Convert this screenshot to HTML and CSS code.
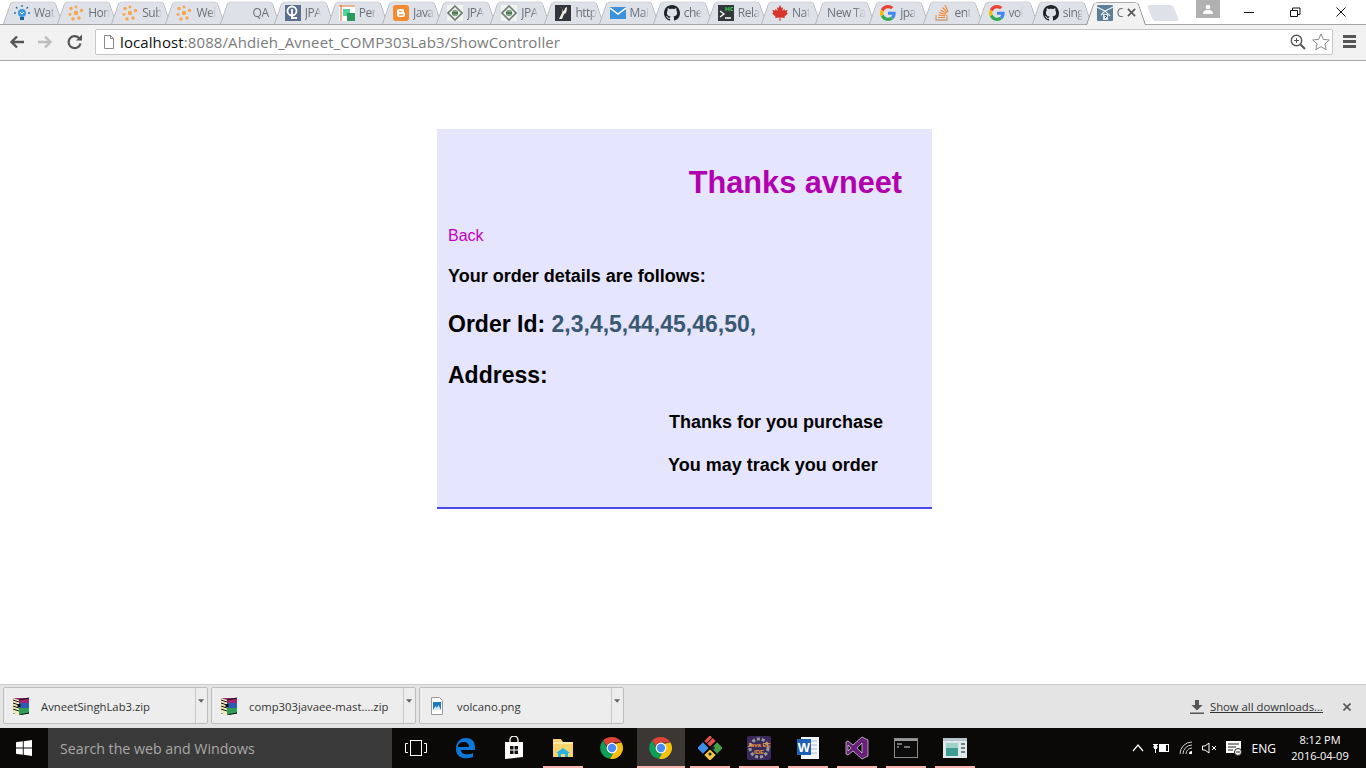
FILE: index.html
```html
<!DOCTYPE html>
<html>
  <head>
    <title>Thanks</title>
    <link rel="stylesheet" href="styles.css">
  </head>

  <body>
    <svg class="defs" width="0" height="0">
      <defs>
        <symbol id="i-hub" viewBox="0 0 16 16">
          <g fill="#f7a64a">
            <circle cx="8" cy="8" r="2.2"/><circle cx="3" cy="3.5" r="1.7"/><circle cx="8" cy="2" r="1.4"/>
            <circle cx="13.5" cy="5.5" r="1.7"/><circle cx="2" cy="9.5" r="1.4"/><circle cx="5" cy="14" r="1.7"/>
            <circle cx="11" cy="13" r="1.7"/>
          </g>
        </symbol>
        <symbol id="i-jpa" viewBox="0 0 16 16">
          <rect width="16" height="16" fill="#f1f3f1"/>
          <path d="M8 1l7 7-7 7-7-7z" fill="none" stroke="#6d7a70" stroke-width="1.6"/>
          <circle cx="8" cy="8" r="3.2" fill="#7fa583"/>
          <path d="M5 8h6" stroke="#3d5540" stroke-width="1.2"/>
        </symbol>
        <symbol id="i-github" viewBox="0 0 16 16">
          <path fill="#1e2327" d="M8 0C3.58 0 0 3.58 0 8c0 3.54 2.29 6.53 5.47 7.59.4.07.55-.17.55-.38 0-.19-.01-.82-.01-1.49-2.01.37-2.53-.49-2.69-.94-.09-.23-.48-.94-.82-1.13-.28-.15-.68-.52-.01-.53.63-.01 1.08.58 1.23.82.72 1.21 1.87.87 2.33.66.07-.52.28-.87.51-1.07-1.78-.2-3.64-.89-3.64-3.95 0-.87.31-1.59.82-2.15-.08-.2-.36-1.02.08-2.12 0 0 .67-.21 2.2.82.64-.18 1.32-.27 2-.27.68 0 1.36.09 2 .27 1.53-1.04 2.2-.82 2.2-.82.44 1.1.16 1.92.08 2.12.51.56.82 1.27.82 2.15 0 3.07-1.87 3.75-3.65 3.95.29.25.54.73.54 1.48 0 1.07-.01 1.93-.01 2.2 0 .21.15.46.55.38A8.013 8.013 0 0016 8c0-4.42-3.58-8-8-8z"/>
        </symbol>
        <symbol id="i-google" viewBox="0 0 48 48">
          <path fill="#EA4335" d="M24 9.5c3.54 0 6.71 1.22 9.21 3.6l6.85-6.85C35.9 2.38 30.47 0 24 0 14.62 0 6.51 5.38 2.56 13.22l7.98 6.19C12.43 13.72 17.74 9.5 24 9.5z"/>
          <path fill="#4285F4" d="M46.98 24.55c0-1.57-.15-3.09-.38-4.55H24v9.02h12.94c-.58 2.96-2.26 5.48-4.78 7.18l7.73 6c4.51-4.18 7.09-10.36 7.09-17.65z"/>
          <path fill="#FBBC05" d="M10.53 28.59c-.48-1.45-.76-2.99-.76-4.59s.27-3.14.76-4.59l-7.98-6.19C.92 16.46 0 20.12 0 24c0 3.88.92 7.54 2.56 10.78l7.97-6.19z"/>
          <path fill="#34A853" d="M24 48c6.48 0 11.93-2.13 15.89-5.81l-7.73-6c-2.15 1.45-4.92 2.3-8.16 2.3-6.26 0-11.57-4.22-13.47-9.91l-7.98 6.19C6.51 42.62 14.62 48 24 48z"/>
        </symbol>
        <symbol id="i-chrome" viewBox="0 0 24 24">
          <path fill="#db4437" d="M12 1a11 11 0 0 1 9.5 5.5H12a5.5 5.5 0 0 0-5.2 3.7L3 4.6A11 11 0 0 1 12 1z"/>
          <path fill="#0f9d58" d="M3 4.6l4.8 8.4a5.5 5.5 0 0 0 5.6 3.9l-3.4 5.9A11 11 0 0 1 3 4.6z"/>
          <path fill="#f4c20d" d="M21.5 6.5A11 11 0 0 1 10 22.8l4.8-8.3a5.5 5.5 0 0 0 .2-6.8z"/>
          <circle cx="12" cy="12" r="5.4" fill="#fff"/>
          <circle cx="12" cy="12" r="4.2" fill="#4c8bf5"/>
        </symbol>
        <symbol id="i-rar" viewBox="0 0 18 18">
          <rect x="1" y="1" width="16" height="5" fill="#a3246f"/>
          <rect x="1" y="6" width="16" height="5" fill="#2a5db0"/>
          <rect x="1" y="11" width="16" height="6" fill="#2f9d57"/>
          <path d="M1 1l6 2v15l-6-2z" fill="#f3e9b8"/>
          <path d="M1 3l6 2M1 6l6 2M1 9l6 2M1 12l6 2M7 3l10-2M7 18l10-2" stroke="#111" stroke-width="1" fill="none"/>
          <rect x="5.500" y="7" width="3" height="3" fill="#111"/>
        </symbol>
        <symbol id="i-caret" viewBox="0 0 8 4">
          <path d="M0 0h7L3.5 4z" fill="#666"/>
        </symbol>
      </defs>
    </svg>

    <header class="tabstrip">
      <div class="tab">
        <svg class="favicon" viewBox="0 0 16 16"><circle cx="8" cy="8" r="4" fill="#3a9bd9"/><rect x="6" y="12" width="4" height="3" fill="#1d5f8c"/><path d="M8 0v2M2 2l1.500 1.500M14 2l-1.500 1.500M0 8h2M14 8h2" stroke="#2d6f9c" stroke-width="1.300"/><path d="M6 7l2 2 2-2" stroke="#fff" fill="none"/></svg>
        <span class="tab-title">Wat</span>
      </div>
      <div class="tab"><svg class="favicon"><use href="#i-hub"/></svg><span class="tab-title">Hon</span></div>
      <div class="tab"><svg class="favicon"><use href="#i-hub"/></svg><span class="tab-title">Sub</span></div>
      <div class="tab"><svg class="favicon"><use href="#i-hub"/></svg><span class="tab-title">Wel</span></div>
      <div class="tab tab-plain tab-qa"><span class="tab-title">QA</span></div>
      <div class="tab">
        <svg class="favicon" viewBox="0 0 16 16"><rect width="16" height="16" fill="#5d6f8d"/><circle cx="7" cy="6" r="4.500" fill="none" stroke="#fff" stroke-width="1.800"/><path d="M7 4v9h5" fill="none" stroke="#fff" stroke-width="1.800"/></svg>
        <span class="tab-title">JPA</span>
      </div>
      <div class="tab">
        <svg class="favicon" viewBox="0 0 16 16"><rect width="16" height="16" fill="#fff"/><path d="M0 1h16M2 0v16" stroke="#d9682c" stroke-width="1"/><rect x="4" y="4" width="7" height="7" fill="#52d29a"/><rect x="8" y="8" width="8" height="8" fill="#2c9a5c"/></svg>
        <span class="tab-title">Per</span>
      </div>
      <div class="tab">
        <svg class="favicon" viewBox="0 0 16 16"><rect width="16" height="16" rx="3" fill="#f58a31"/><path d="M6 4h3a2 2 0 0 1 2 2.500V7a1 1 0 0 0 1 1v2.500A2 2 0 0 1 10 12H6a2 2 0 0 1-2-2V6a2 2 0 0 1 2-2z" fill="#fff"/><path d="M6 6.500h2.500M6 9.800h4" stroke="#f58a31" stroke-width="1.200"/></svg>
        <span class="tab-title">Java</span>
      </div>
      <div class="tab"><svg class="favicon"><use href="#i-jpa"/></svg><span class="tab-title">JPA</span></div>
      <div class="tab"><svg class="favicon"><use href="#i-jpa"/></svg><span class="tab-title">JPA</span></div>
      <div class="tab">
        <svg class="favicon" viewBox="0 0 16 16"><rect width="16" height="16" fill="#33363a"/><path d="M5 2c3 0 3 4 2 6l-3 6h3l2-5c2 0 3-3 3-7l-2 1c0 2-1 3-2 3 0-2-1-4-3-4z" fill="#f2eee2"/></svg>
        <span class="tab-title">http</span>
      </div>
      <div class="tab">
        <svg class="favicon" viewBox="0 0 16 16"><rect y="2" width="16" height="12" fill="#3c93dc"/><path d="M0 3l8 6 8-6" fill="none" stroke="#fff" stroke-width="1.500"/></svg>
        <span class="tab-title">Mai</span>
      </div>
      <div class="tab"><svg class="favicon"><use href="#i-github"/></svg><span class="tab-title">che</span></div>
      <div class="tab">
        <svg class="favicon" viewBox="0 0 16 16"><rect width="16" height="16" fill="#33383a"/><path d="M2 6l4 3-4 3M7 13h6" fill="none" stroke="#fff" stroke-width="1.300"/><path d="M8 2v4M11 2v4M8 4h3M15 2.500h-2v3h2" fill="none" stroke="#39d353" stroke-width="1"/></svg>
        <span class="tab-title">Rela</span>
      </div>
      <div class="tab">
        <svg class="favicon" viewBox="0 0 16 16"><path d="M8 0l1.500 3 1.500-.8-.6 3.800 2-2 .6 1.500 2.500-.4-.8 2.700L16 8.500l-3.500 3 .4 1.500L8.500 12.500V16h-1v-3.500L3.100 13l.4-1.500L0 8.500l1.300-.7L.5 5.100l2.500.4.600-1.500 2 2L5 2.200l1.500.8z" fill="#d7352b"/></svg>
        <span class="tab-title">Nat</span>
      </div>
      <div class="tab tab-plain tab-new"><span class="tab-title">New Ta</span></div>
      <div class="tab"><svg class="favicon"><use href="#i-google"/></svg><span class="tab-title">jpa</span></div>
      <div class="tab">
        <svg class="favicon" viewBox="0 0 16 16"><path d="M2 10v5h11v-5" fill="none" stroke="#c9a27c" stroke-width="1.300"/><path d="M4 12.500h7M4.300 10l7 .8M5 7.500l6.800 2M6.500 5l6 3.500M8.500 2.500l5 5M11 0l3 6.500" stroke="#f48a3c" stroke-width="1.200"/></svg>
        <span class="tab-title">ent</span>
      </div>
      <div class="tab"><svg class="favicon"><use href="#i-google"/></svg><span class="tab-title">vol</span></div>
      <div class="tab"><svg class="favicon"><use href="#i-github"/></svg><span class="tab-title">sing</span></div>
      <div class="tab tab-active">
        <svg class="favicon" viewBox="0 0 16 16"><rect width="16" height="16" rx="1" fill="#5f7f96"/><path d="M0 2l8 4 8-4M8 6l-4 4M8 6l5 5" stroke="#e7edf0" stroke-width="1.200" fill="none"/><rect x="6" y="9" width="5" height="6" fill="#dfe7ec"/><path d="M7.500 10.500h2v1.500h-1v1" stroke="#3c5566" fill="none"/></svg>
        <span class="tab-title">C</span>
        <svg class="tab-close" viewBox="0 0 10 10"><path d="M1 1l8 8M9 1l-8 8" stroke="#555" stroke-width="1.800"/></svg>
      </div>
      <div class="tab-new-button"></div>
      <div class="user-badge">
        <svg viewBox="0 0 12 10" width="12" height="10"><circle cx="6" cy="3" r="2.300" fill="#fff"/><path d="M1 10c0-3 2-4 5-4s5 1 5 4z" fill="#fff"/></svg>
      </div>
      <div class="window-controls">
        <svg viewBox="0 0 46 20" width="46" height="20"><path d="M18 10.500h10" stroke="#111"/></svg>
        <svg viewBox="0 0 46 20" width="46" height="20"><path d="M18.500 8.500h7v6h-7zM20.500 8.500V6h7.500v6.500h-2.500" fill="none" stroke="#111"/></svg>
        <svg viewBox="0 0 46 20" width="46" height="20"><path d="M18.500 5.500l9 9M27.500 5.500l-9 9" stroke="#111"/></svg>
      </div>
    </header>

    <nav class="toolbar">
      <svg class="nav-icon" viewBox="0 0 16 16"><path d="M15 8H3M8 2.500L2.500 8 8 13.500" fill="none" stroke="#555" stroke-width="2.400"/></svg>
      <svg class="nav-icon" viewBox="0 0 16 16"><path d="M1 8h12M8 2.500L13.500 8 8 13.500" fill="none" stroke="#bdbdbd" stroke-width="2.400"/></svg>
      <svg class="nav-icon" viewBox="0 0 16 16"><path d="M13.500 9.500A6 6 0 1 1 12 4" fill="none" stroke="#555" stroke-width="2.200"/><path d="M9 6.500h6v-6z" fill="#555"/></svg>
      <div class="omnibox">
        <svg class="page-icon" viewBox="0 0 12 14"><path d="M1.500.5h6l3 3v10h-9z M7.500.5v3h3" fill="#fff" stroke="#8a8a8a"/></svg>
        <span class="url"><span class="url-host">localhost</span>:8088/Ahdieh_Avneet_COMP303Lab3/ShowController</span>
        <svg class="zoom-icon" viewBox="0 0 16 16"><circle cx="6.500" cy="6.500" r="5.200" fill="none" stroke="#555" stroke-width="1.400"/><path d="M10.500 10.500L15 15" stroke="#555" stroke-width="2"/><path d="M4 6.500h5M6.500 4v5" stroke="#555"/></svg>
        <svg class="star-icon" viewBox="0 0 18 18"><path d="M9 1l2.400 5.400 5.900.6-4.400 3.900 1.300 5.800L9 13.700l-5.200 3 1.300-5.800L.7 7l5.900-.6z" fill="#fff" stroke="#8a8a8a"/></svg>
      </div>
      <div class="menu-button"><span></span><span></span><span></span></div>
    </nav>

    <main class="page">
      <div class="order-box">
        <h1>Thanks avneet</h1>
        <a class="back-link" href="#">Back</a>
        <h3>Your order details are follows:</h3>
        <h2 class="order-id">Order Id: <span class="order-numbers">2,3,4,5,44,45,46,50,</span></h2>
        <h2 class="address">Address:</h2>
        <h3 class="thanks-line">Thanks for you purchase</h3>
        <h3 class="track-line">You may track you order</h3>
      </div>
    </main>

    <section class="shelf">
      <div class="download">
        <div class="download-main"><svg class="file-icon"><use href="#i-rar"/></svg><span>AvneetSinghLab3.zip</span></div>
        <div class="download-caret"><svg width="7" height="4"><use href="#i-caret"/></svg></div>
      </div>
      <div class="download">
        <div class="download-main"><svg class="file-icon"><use href="#i-rar"/></svg><span>comp303javaee-mast....zip</span></div>
        <div class="download-caret"><svg width="7" height="4"><use href="#i-caret"/></svg></div>
      </div>
      <div class="download">
        <div class="download-main">
          <svg class="file-icon" viewBox="0 0 18 18"><path d="M3.500.5h8l3 3v14h-11z" fill="#fff" stroke="#9a9a9a"/><rect x="5" y="5" width="8" height="8" fill="#1b78c9"/><path d="M5 13l2.500-4 1.500 2 1.500-3 2.500 5z" fill="#d6e8f6"/></svg>
          <span>volcano.png</span>
        </div>
        <div class="download-caret"><svg width="7" height="4"><use href="#i-caret"/></svg></div>
      </div>
      <div class="shelf-right">
        <svg width="14" height="14" viewBox="0 0 14 14"><path d="M5 0h4v5h3.500L7 10.500 1.500 5H5zM0 12.500h14V14H0z" fill="#555"/></svg>
        <a class="show-all" href="#">Show all downloads...</a>
        <svg class="shelf-close" width="8" height="8" viewBox="0 0 8 8"><path d="M.5.5l7 7M7.500.5l-7 7" stroke="#555" stroke-width="1.600"/></svg>
      </div>
    </section>

    <footer class="taskbar">
      <div class="start">
        <svg width="16" height="16" viewBox="0 0 16 16"><path d="M0 2.300l6.800-1v6.300H0zM7.700 1.200L16 0v7.600H7.700zM0 8.400h6.800v6.300l-6.800-1zM7.700 8.400H16V16l-8.300-1.200z" fill="#fff"/></svg>
      </div>
      <div class="search">Search the web and Windows</div>
      <div class="task">
        <svg width="22" height="18" viewBox="0 0 22 18"><rect x="5.500" y="1.500" width="11" height="15" fill="none" stroke="#fff"/><path d="M3 4.500H.5v9H3M19 4.500h2.500v9H19" fill="none" stroke="#fff"/></svg>
      </div>
      <div class="task">
        <svg width="22" height="22" viewBox="0 0 22 22"><path d="M2 10C3 4 7 1 12 1c5 0 9 3 9 9v3H7c0 4 6 6 12 3v4c-8 3-17 1-17-8 0-2 1-4 3-5-1 1-1 2-1 3h11c0-3-2-5-5-5-4 0-6 2-7 5z" fill="#0a78d7"/></svg>
      </div>
      <div class="task">
        <svg width="20" height="24" viewBox="0 0 20 24"><path d="M6 7V4a4 4 0 0 1 8 0v3" fill="none" stroke="#fff" stroke-width="1.300"/><path d="M1 6h18v15l-18 2z" fill="#fff"/><path d="M6 10h3.500v3.500H6zM10.500 10H14v3.500h-3.500zM6 14.500h3.500V18H6zM10.500 14.500H14V18h-3.500z" fill="#111"/></svg>
      </div>
      <div class="task task-pinned">
        <svg width="22" height="22" viewBox="0 0 22 22"><path d="M1 2h8l2 3h10v15H1z" fill="#f6d56f"/><rect x="1" y="5" width="20" height="2" fill="#fbe9a6"/><path d="M6 20v-4H4l7-5 7 5h-2v4h-3v-3H9v3z" fill="#27b3e6"/></svg>
      </div>
      <div class="task"><svg width="24" height="24"><use href="#i-chrome"/></svg></div>
      <div class="task task-active"><svg width="24" height="24"><use href="#i-chrome"/></svg></div>
      <div class="task task-pinned">
        <svg width="24" height="24" viewBox="0 0 24 24"><g transform="rotate(45 12 12)"><path d="M3 3h3v8H3zM7 3h4v8H7z" fill="#e0514c"/><rect x="13" y="3" width="8" height="8" fill="#44a14a"/><rect x="3" y="13" width="8" height="8" fill="#3d8fe8"/><rect x="13" y="13" width="8" height="8" fill="#f0c64b"/></g><circle cx="15" cy="12" r="1.800" fill="#222"/><circle cx="12" cy="18" r="1.500" fill="#222"/></svg>
      </div>
      <div class="task task-pinned">
        <svg width="24" height="24" viewBox="0 0 24 24"><rect width="24" height="24" rx="2" fill="#3a2a5c"/><circle cx="12" cy="12" r="9" fill="none" stroke="#9a9a9a" stroke-width="3" stroke-dasharray="3 2"/><text x="12" y="11" class="java-label">Java EE</text><text x="12" y="18" class="java-label">IDE</text></svg>
      </div>
      <div class="task task-pinned">
        <svg width="24" height="24" viewBox="0 0 24 24"><path d="M5 1h18v22H5z" fill="#f3f6fb"/><path d="M13 5h8M13 9h8M13 13h8M13 17h8" stroke="#a9c0e0"/><rect x="1" y="3" width="14" height="16" fill="#1f5fb4"/><text x="8" y="16" class="word-label">W</text></svg>
      </div>
      <div class="task task-pinned">
        <svg width="24" height="24" viewBox="0 0 24 24"><path d="M17 1l6 3v16l-6 3-9-8-5 4-2-1V6l2-1 5 4zM17 7l-5 5 5 5zM3 9v6l3-3z" fill="#68217a" stroke="#fff" stroke-width=".6"/></svg>
      </div>
      <div class="task task-pinned">
        <svg width="24" height="20" viewBox="0 0 24 20"><rect x=".5" y=".5" width="23" height="19" fill="#0b0b0b" stroke="#8a8a8a"/><rect x="1" y="1" width="22" height="2" fill="#9a9a9a"/><path d="M3 6h5M3 9h2M10 9h6" stroke="#ddd"/></svg>
      </div>
      <div class="task task-pinned">
        <svg width="24" height="20" viewBox="0 0 24 20"><rect width="24" height="20" fill="#dfe8ea"/><rect y="0" width="24" height="3" fill="#b7c6cc"/><rect x="3" y="5" width="12" height="13" fill="#3f9a8f"/><rect x="3" y="5" width="12" height="5" fill="#9fd0c9"/><path d="M18 6h4M18 10h4M18 14h4" stroke="#4d5f66" stroke-width="1.500"/></svg>
      </div>
      <div class="tray">
        <svg width="12" height="8" viewBox="0 0 12 8"><path d="M1 7l5-6 5 6" fill="none" stroke="#fff" stroke-width="1.200"/></svg>
        <svg width="17" height="12" viewBox="0 0 17 12"><path d="M0 2.500h5M0 5h5M2.500 7v4" stroke="#fff"/><rect x="1" y="3" width="3" height="4" fill="#fff"/><rect x="6.500" y="2.500" width="9" height="7" fill="none" stroke="#fff"/><rect x="7" y="3" width="6" height="6" fill="#fff"/></svg>
        <svg width="14" height="14" viewBox="0 0 14 14"><path d="M1 13A12 12 0 0 1 13 1M4 13a9 9 0 0 1 9-9M7 13a6 6 0 0 1 6-6" fill="none" stroke="#cfcfcf"/><path d="M10 13a3 3 0 0 1 3-3v3z" fill="#fff"/></svg>
        <svg width="15" height="12" viewBox="0 0 15 12"><path d="M.5 4h2.500l4-3v10l-4-3H.5z" fill="none" stroke="#fff"/><path d="M10 4l4 4M14 4l-4 4" stroke="#fff"/></svg>
        <svg width="17" height="15" viewBox="0 0 17 15"><rect width="15" height="12" fill="#fff"/><path d="M2 3h11M2 6h8M2 9h5" stroke="#222"/><circle cx="12" cy="11" r="3.500" fill="#fff" stroke="#222"/><path d="M10 11h4" stroke="#222"/></svg>
        <span class="tray-lang">ENG</span>
        <div class="clock"><span>8:12 PM</span><span>2016-04-09</span></div>
      </div>
    </footer>
  </body>
</html>
```

FILE: styles.css
```css
html,
body {
  margin: 0;
  height: 100%;
}

body {
  width: 1366px;
  height: 768px;
  overflow: hidden;
  display: flex;
  flex-direction: column;
  background: #fff;
  font-family: "Open Sans", "Noto Sans", sans-serif;
}

.defs {
  position: absolute;
}

/* browser tabs */
.tabstrip {
  height: 25px;
  box-sizing: border-box;
  display: flex;
  align-items: flex-end;
  padding-left: 6px;
  background: #fff;
  border-bottom: 1px solid #a6a6a6;
}

.tab {
  position: relative;
  width: 54.15px;
  height: 23px;
  flex: none;
  display: flex;
  align-items: center;
  padding-left: 8px;
  box-sizing: border-box;
  font-size: 12px;
  letter-spacing: -0.5px;
  color: #6c7079;
}

/* trapezoid tab shape */
.tab::before {
  content: "";
  position: absolute;
  top: -10px;
  bottom: 0;
  left: -3px;
  right: -3px;
  background: #dee2e8;
  border: 1px solid #b4b7bc;
  border-bottom: none;
  border-radius: 5px 5px 0 0;
  transform: perspective(40px) rotateX(25deg);
  transform-origin: bottom;
}

.tab-active::before {
  bottom: -1px;
  background: #f2f2f2;
  border-color: #8f8f8f;
}

.favicon {
  position: relative;
  width: 16px;
  height: 16px;
  flex: none;
  margin-right: 4px;
}

.tab-title {
  position: relative;
  white-space: nowrap;
  -webkit-mask-image: linear-gradient(to right, #000 70%, transparent 100%);
  mask-image: linear-gradient(to right, #000 70%, transparent 100%);
}

.tab-qa .tab-title {
  margin-left: 22px;
  -webkit-mask-image: none;
  mask-image: none;
}

.tab-new .tab-title {
  margin-left: 1px;
}

.tab-active .tab-title {
  width: 7px;
}

.tab-close {
  position: relative;
  width: 9px;
  height: 9px;
  margin-left: 3px;
  flex: none;
}

.tab-new-button {
  width: 26px;
  height: 16px;
  margin: 0 0 3px 7px;
  background: #dee2e8;
  border-radius: 3px;
  transform: skewX(22deg);
  flex: none;
}

.user-badge {
  align-self: flex-start;
  width: 24px;
  height: 18px;
  margin-left: 20px;
  background: #b0b0b0;
  display: flex;
  align-items: center;
  justify-content: center;
  flex: none;
}

.window-controls {
  align-self: flex-start;
  display: flex;
  margin-left: 6px;
  margin-top: 2px;
}

/* address bar */
.toolbar {
  height: 36px;
  box-sizing: border-box;
  display: flex;
  align-items: center;
  padding: 0 8px 2px 9px;
  background: #f2f2f2;
  border-bottom: 1px solid #a8a8a8;
}

.nav-icon {
  width: 16px;
  height: 16px;
  margin-right: 12px;
  flex: none;
}

.nav-icon:nth-child(3) {
  margin-left: 2px;
}

.omnibox {
  width: 1238px;
  height: 26px;
  box-sizing: border-box;
  display: flex;
  align-items: center;
  padding: 0 2px 0 7px;
  background: #fff;
  border: 1px solid #c6c6c6;
  border-radius: 2px;
  flex: none;
}

.page-icon {
  width: 12px;
  height: 14px;
  margin-right: 5px;
}

.url {
  flex: 1;
  font-size: 15px;
  letter-spacing: 0.1px;
  color: #7b7b7b;
  white-space: nowrap;
}

.url-host {
  color: #111;
}

.zoom-icon {
  width: 16px;
  height: 16px;
  margin-right: 6px;
}

.star-icon {
  width: 18px;
  height: 18px;
}

.menu-button {
  width: 13px;
  margin-left: 10px;
  display: flex;
  flex-direction: column;
  gap: 2px;
}

.menu-button span {
  height: 3px;
  background: #555;
}

/* page content */
.page {
  flex: 1;
  padding: 68px 0 0 437px;
}

.order-box {
  width: 495px;
  height: 380px;
  box-sizing: border-box;
  padding: 0 11px;
  background: #e5e5fd;
  border-bottom: 2px solid #4a4aee;
  font-family: "Liberation Sans", Arial, sans-serif;
  color: #000;
  overflow: hidden;
}

h1 {
  margin: 36px 19px 0 0;
  font-size: 30.7px;
  line-height: 36px;
  text-align: right;
  color: #b000b0;
}

.back-link {
  display: block;
  margin-top: 26px;
  font-size: 16px;
  line-height: 18px;
  color: #c000c0;
  text-decoration: none;
}

h3 {
  margin: 0;
  font-size: 18px;
  line-height: 21px;
}

.order-box > h3:first-of-type {
  margin-top: 21px;
}

h2 {
  margin: 0;
  font-size: 23px;
  line-height: 26px;
}

.order-id {
  margin-top: 24px;
}

.order-numbers {
  color: #3a5872;
}

.address {
  margin-top: 25px;
}

.thanks-line {
  margin: 24px 0 0 221px;
}

.track-line {
  margin: 22px 0 0 220px;
}

/* download shelf */
.shelf {
  height: 44px;
  box-sizing: border-box;
  display: flex;
  align-items: center;
  gap: 3px;
  padding: 0 0 2px 3px;
  background: #e4e4e4;
  border-top: 1px solid #cdcdcd;
  font-size: 11.3px;
  color: #333;
}

.download {
  width: 205px;
  height: 37px;
  box-sizing: border-box;
  display: flex;
  background: #ededed;
  border: 1px solid #bdbdbd;
  border-radius: 2px;
  flex: none;
}

.download-main {
  flex: 1;
  display: flex;
  align-items: center;
  gap: 11px;
  padding: 1px 0 0 8px;
}

.file-icon {
  width: 18px;
  height: 18px;
  flex: none;
}

.download-caret {
  width: 12px;
  display: flex;
  justify-content: center;
  padding-top: 11px;
  box-sizing: border-box;
  border-left: 1px solid #c8c8c8;
}

.shelf-right {
  margin-left: auto;
  display: flex;
  align-items: center;
  padding: 2px 15px 0 0;
}

.show-all {
  margin-left: 6px;
  color: #333;
}

.shelf-close {
  margin-left: 20px;
}

/* windows taskbar */
.taskbar {
  height: 40px;
  display: flex;
  background: #0b0808;
  color: #fff;
}

.start {
  width: 48px;
  display: flex;
  align-items: center;
  justify-content: center;
  flex: none;
}

.search {
  width: 344px;
  box-sizing: border-box;
  padding-left: 12px;
  display: flex;
  align-items: center;
  background: #3a3a3a;
  color: #a8a8a8;
  font-size: 14.2px;
  flex: none;
}

.task {
  position: relative;
  width: 48px;
  margin-right: 1px;
  display: flex;
  align-items: center;
  justify-content: center;
  flex: none;
}

/* running app underline */
.task-pinned::after,
.task-active::after {
  content: "";
  position: absolute;
  left: 4px;
  right: 4px;
  bottom: 0;
  height: 2px;
  background: #f7b4ad;
}

.task-active {
  background: #3b3735;
}

.task-active::after {
  left: 0;
  right: 0;
}

.java-label {
  font-family: "Liberation Sans", sans-serif;
  font-size: 6px;
  font-weight: bold;
  fill: #f09a3a;
  text-anchor: middle;
}

.word-label {
  font-family: "Liberation Sans", sans-serif;
  font-size: 13px;
  font-weight: bold;
  fill: #fff;
  text-anchor: middle;
}

.tray {
  margin-left: auto;
  display: flex;
  align-items: center;
  gap: 9px;
  padding-right: 15px;
  font-size: 12px;
}

.clock {
  width: 62px;
  margin-left: 4px;
  display: flex;
  flex-direction: column;
  align-items: center;
  font-size: 11px;
  line-height: 16px;
  white-space: nowrap;
}
```
